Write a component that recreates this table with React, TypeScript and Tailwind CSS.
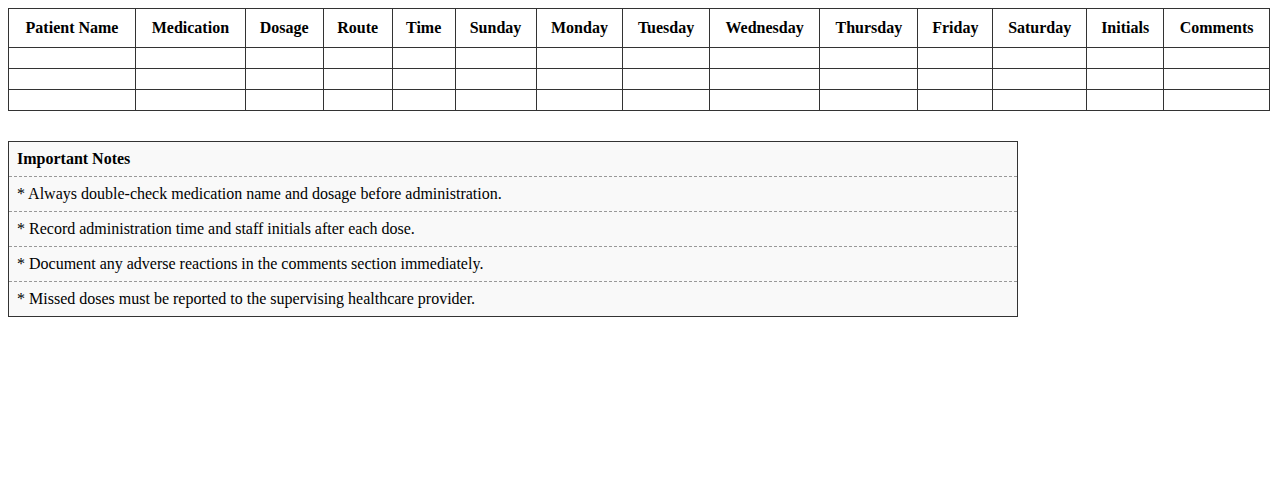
const columns = [
  "Patient Name",
  "Medication",
  "Dosage",
  "Route",
  "Time",
  "Sunday",
  "Monday",
  "Tuesday",
  "Wednesday",
  "Thursday",
  "Friday",
  "Saturday",
  "Initials",
  "Comments",
];

const notes = [
  "* Always double-check medication name and dosage before administration.",
  "* Record administration time and staff initials after each dose.",
  "* Document any adverse reactions in the comments section immediately.",
  "* Missed doses must be reported to the supervising healthcare provider.",
];

export default function App() {
  return (
    <div className="p-2 bg-white text-black text-[16px] font-['Liberation_Serif','Times_New_Roman',serif]">
      <table className="w-full border-collapse">
        <thead>
          <tr>
            {columns.map((col) => (
              <th key={col} className="border border-[#333] p-[10px] font-bold text-center leading-[18px]">
                {col}
              </th>
            ))}
          </tr>
        </thead>
        <tbody>
          {[0, 1, 2].map((row) => (
            <tr key={row}>
              {columns.map((col) => (
                <td key={col} className="border border-[#333] p-[10px]"></td>
              ))}
            </tr>
          ))}
        </tbody>
      </table>

      <div className="mt-[30px] w-4/5 border border-[#333] bg-[#f9f9f9]">
        <div className="px-2 py-2 leading-[18px] font-bold border-b border-dashed border-[#999]">
          Important Notes
        </div>
        {notes.map((note, i) => (
          <div
            key={i}
            className={`px-2 py-2 leading-[18px] ${i < notes.length - 1 ? "border-b border-dashed border-[#999]" : ""}`}
          >
            {note}
          </div>
        ))}
      </div>
    </div>
  );
}
